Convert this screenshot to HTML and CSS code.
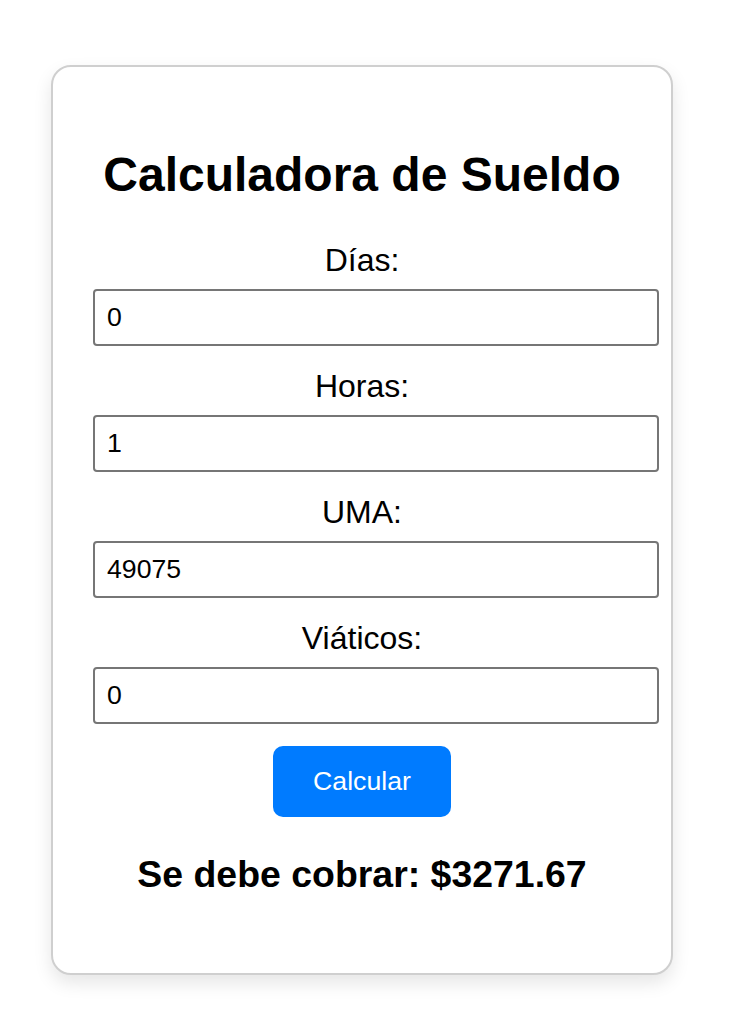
FILE: index.html
```html
<!DOCTYPE html>
<html lang="es">
<head>
<meta charset="utf-8">
<title>Calculadora de Sueldo</title>
<link rel="stylesheet" href="styles.css">
</head>
<body>
<div class="card">
  <h2 class="title">Calculadora de Sueldo</h2>
  <label class="field-label" for="dias">Días:</label>
  <input class="field-input" id="dias" type="text" value="0">
  <label class="field-label" for="horas">Horas:</label>
  <input class="field-input" id="horas" type="text" value="1">
  <label class="field-label" for="uma">UMA:</label>
  <input class="field-input" id="uma" type="text" value="49075">
  <label class="field-label" for="viaticos">Viáticos:</label>
  <input class="field-input" id="viaticos" type="text" value="0">
  <button class="calc-btn" type="button">Calcular</button>
  <h3 class="result">Se debe cobrar: $3271.67</h3>
</div>
</body>
</html>
```

FILE: styles.css
```css
html, body {
  margin: 0;
  padding: 0;
  background: #ffffff;
}

body {
  font-family: "Liberation Sans", Arial, sans-serif;
  color: #000;
  padding-bottom: 49px;
}

.card {
  width: 538px;
  margin: 65px 0 0 51px;
  padding: 40px;
  border: 2px solid #cfcfcf;
  border-radius: 20px;
  box-shadow: 0 8px 18px rgba(0, 0, 0, 0.1);
  text-align: center;
  background: #fff;
}

.title {
  font-size: 48px;
  font-weight: bold;
  margin: 0.83em 0;
}

.field-label {
  display: block;
  font-size: 32px;
  margin-bottom: 10px;
}

.field-input {
  display: block;
  width: 100%;
  box-sizing: content-box;
  padding: 11px 12px;
  margin: 0 0 22px 0;
  border: 2px solid #767676;
  border-radius: 4px;
  font-family: "Liberation Sans", Arial, sans-serif;
  font-size: 26.67px;
  line-height: 31px;
  height: 31px;
  color: #000;
  text-align: left;
  background: #fff;
}

.calc-btn {
  display: block;
  margin: 0 auto;
  padding: 20px 40px;
  border: none;
  border-radius: 10px;
  background: #007bff;
  color: #fff;
  font-family: "Liberation Sans", Arial, sans-serif;
  font-size: 26.67px;
}

.result {
  font-size: 37.44px;
  font-weight: bold;
  margin: 36px 0 37.44px;
}
```
